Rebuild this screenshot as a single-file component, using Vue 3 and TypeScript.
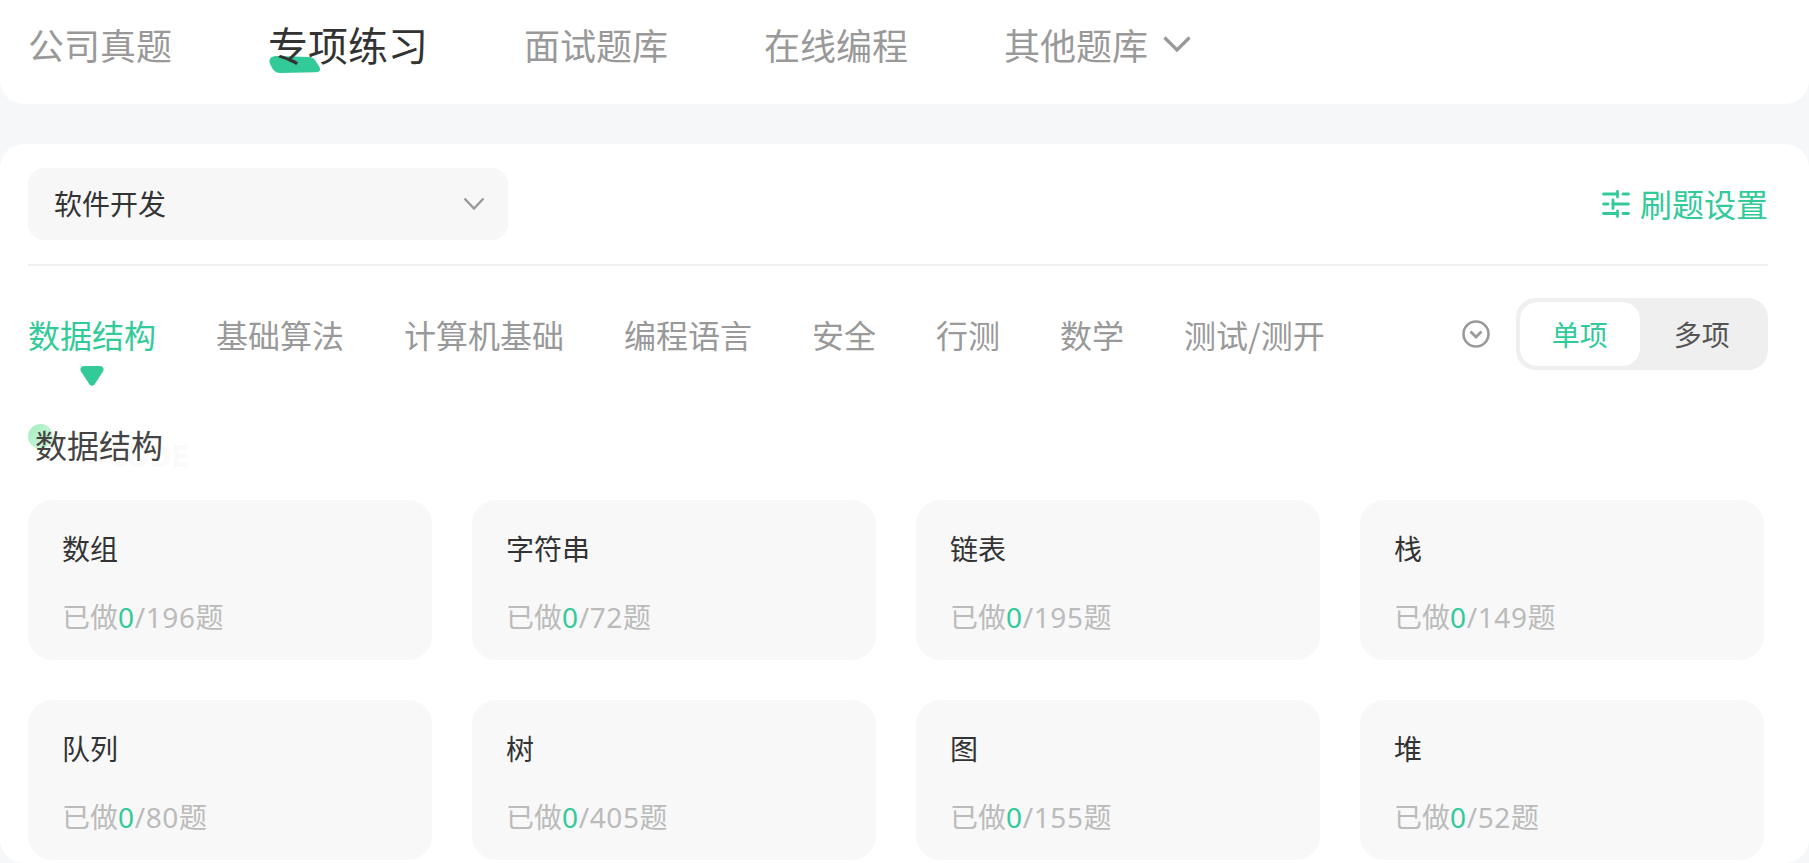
<script setup lang="ts">
const navItems: { label: string; active?: boolean }[] = [
  { label: '公司真题' },
  { label: '专项练习', active: true },
  { label: '面试题库' },
  { label: '在线编程' },
]
const tabs: string[] = ['基础算法', '计算机基础', '编程语言', '安全', '行测', '数学', '测试/测开']
const cards: { name: string; total: number }[] = [
  { name: '数组', total: 196 },
  { name: '字符串', total: 72 },
  { name: '链表', total: 195 },
  { name: '栈', total: 149 },
  { name: '队列', total: 80 },
  { name: '树', total: 405 },
  { name: '图', total: 155 },
  { name: '堆', total: 52 },
]
</script>

<template>
  <div class="page">
    <header class="top">
      <a v-for="n in navItems" :key="n.label" class="nav" :class="{ on: n.active }">
        <svg v-if="n.active" class="brush" width="52" height="17" viewBox="0 0 52 17">
          <path d="M7 0L41 1Q44 1.500 46 4L50.500 11Q52.500 15.500 47 16.200L11 17Q7 17 4 13.500L1 8Q-1.500 .5 7 0Z" fill="#32ca99" />
        </svg>
        <span class="nav-t">{{ n.label }}</span>
      </a>
      <a class="nav more">
        <span class="nav-t">其他题库</span>
        <svg class="more-i" width="30" height="20" viewBox="0 0 30 20" fill="none">
          <path d="M2.500 3.500L15 16 27.500 3.500" stroke="#999" stroke-width="3.200" />
        </svg>
      </a>
    </header>

    <main class="panel">
      <div class="row1">
        <div class="select">
          <span class="sel-t">软件开发</span>
          <svg width="22" height="16" viewBox="0 0 22 16" fill="none">
            <path d="M1.500 2.500L11 12.500 20.500 2.500" stroke="#999" stroke-width="2.400" />
          </svg>
        </div>
        <a class="setting">
          <svg width="28" height="28" viewBox="0 0 28 28" fill="none" stroke="#32ca99" stroke-width="2.800" stroke-linecap="round">
            <path d="M1.500 4H15M21 4H26.500M1.500 14H6M11 14H26.500M1.500 23.500H15M21 23.500H26.500" />
            <path d="M15.500 1.500V7M11 10V18.500M15.500 21V26.500" />
          </svg>
          <span class="set-t">刷题设置</span>
        </a>
      </div>

      <div class="row2">
        <div class="tabs">
          <a class="tab on">
            数据结构
            <svg class="tri" width="24" height="20" viewBox="0 0 24 20">
              <path d="M5 0H19Q24 0 23.600 4Q23 6 21 8.500L14.500 18.500Q12 21 9.500 18.500L3 8.500Q1 6 .4 4Q0 0 5 0Z" fill="#32ca99" />
            </svg>
          </a>
          <a v-for="t in tabs" :key="t" class="tab">{{ t }}</a>
        </div>
        <svg class="expand" width="28" height="28" viewBox="0 0 28 28" fill="none" stroke="#999">
          <circle cx="14" cy="14" r="12.500" stroke-width="2.600" />
          <path d="M8.500 11.500l5.500 5.500 5.500-5.500" stroke-width="2.800" />
        </svg>
        <div class="toggle">
          <span class="opt sel">单项</span>
          <span class="opt">多项</span>
        </div>
      </div>

      <div class="sec">
        <i class="dot"></i>
        <span class="mark">CODE</span>
        <span class="sec-t">数据结构</span>
      </div>

      <div class="grid">
        <div v-for="c in cards" :key="c.name" class="card">
          <div class="c-name">{{ c.name }}</div>
          <div class="c-sub">已做<em class="num">0</em><span class="num">/{{ c.total }}</span>题</div>
        </div>
      </div>
    </main>
  </div>
</template>

<style>
html, body { margin: 0; background: #f6f7f9; }
</style>

<style scoped>
.page {
  height: 863px;
  overflow: hidden;
  font-family: "Noto Sans CJK SC", "Noto Sans", sans-serif;
  background: #f6f7f9;
}
.top {
  height: 104px;
  background: #fff;
  border-radius: 0 0 24px 24px;
  display: flex;
  align-items: center;
  gap: 96px;
  padding: 0 28px 16px;
  box-sizing: border-box;
}
.nav {
  position: relative;
  font-size: 36px;
  line-height: 48px;
  color: #999;
  white-space: nowrap;
  display: flex;
  align-items: center;
}
.nav-t { position: relative; }
.nav.on { font-size: 40px; color: #333; }
.brush {
  position: absolute;
  left: 1px;
  top: 36px;
}
.more-i { margin-left: 14px; }
.panel {
  margin-top: 40px;
  height: 719px;
  background: #fff;
  border-radius: 24px;
  padding: 24px 41px 0 28px;
  box-sizing: border-box;
}
.row1 {
  display: flex;
  justify-content: space-between;
  align-items: flex-start;
  height: 98px;
  box-sizing: border-box;
  border-bottom: 2px solid #f0f0f0;
}
.select {
  width: 480px;
  height: 72px;
  box-sizing: border-box;
  padding: 0 23px 0 26px;
  background: #f7f7f8;
  border-radius: 16px;
  display: flex;
  justify-content: space-between;
  align-items: center;
  font-size: 28px;
  color: #333;
}
.sel-t { padding-bottom: 2px; }
.setting {
  display: flex;
  align-items: center;
  gap: 10px;
  height: 72px;
  font-size: 32px;
  color: #32ca99;
}
.set-t { padding-bottom: 2px; }
.row2 {
  display: flex;
  align-items: center;
  margin-top: 32px;
  height: 72px;
}
.tabs {
  display: flex;
  gap: 60px;
  flex: 1;
}
.tab {
  position: relative;
  font-size: 32px;
  line-height: 44px;
  color: #999;
  white-space: nowrap;
}
.tab.on { color: #32ca99; }
.tri {
  position: absolute;
  left: 52px;
  top: 54px;
}
.expand { margin-right: 26px; }
.toggle {
  width: 252px;
  height: 72px;
  box-sizing: border-box;
  padding: 4px;
  border-radius: 20px;
  background: #efefef;
  display: flex;
}
.opt {
  width: 120px;
  display: flex;
  align-items: center;
  justify-content: center;
  font-size: 28px;
  color: #555;
  border-radius: 18px;
}
.opt + .opt { width: 125px; }
.opt.sel { background: #fff; color: #32ca99; }
.sec {
  position: relative;
  margin-top: 54px;
  height: 40px;
  display: flex;
  align-items: center;
}
.dot {
  position: absolute;
  left: 0;
  top: 0;
  width: 25px;
  height: 25px;
  border-radius: 50%;
  background: linear-gradient(135deg, #a3edc0, #d4f6e0);
}
.mark {
  position: absolute;
  left: 80px;
  top: 15px;
  font-size: 30px;
  line-height: 30px;
  font-weight: 700;
  color: #fafafa;
}
.sec-t {
  position: relative;
  margin-left: 7px;
  font-size: 32px;
  color: #444;
}
.grid {
  margin-top: 36px;
  display: grid;
  grid-template-columns: repeat(4, 404px);
  gap: 40px;
}
.card {
  height: 160px;
  box-sizing: border-box;
  padding: 28px 34px 0;
  background: #f8f8f8;
  border-radius: 24px;
}
.c-name {
  font-size: 28px;
  line-height: 40px;
  color: #333;
}
.c-sub {
  margin-top: 28px;
  font-size: 28px;
  line-height: 40px;
  color: #bbb;
}
.num {
  font-family: "Noto Sans", sans-serif;
  letter-spacing: .6px;
}
.c-sub em { font-style: normal; color: #32ca99; }
</style>
